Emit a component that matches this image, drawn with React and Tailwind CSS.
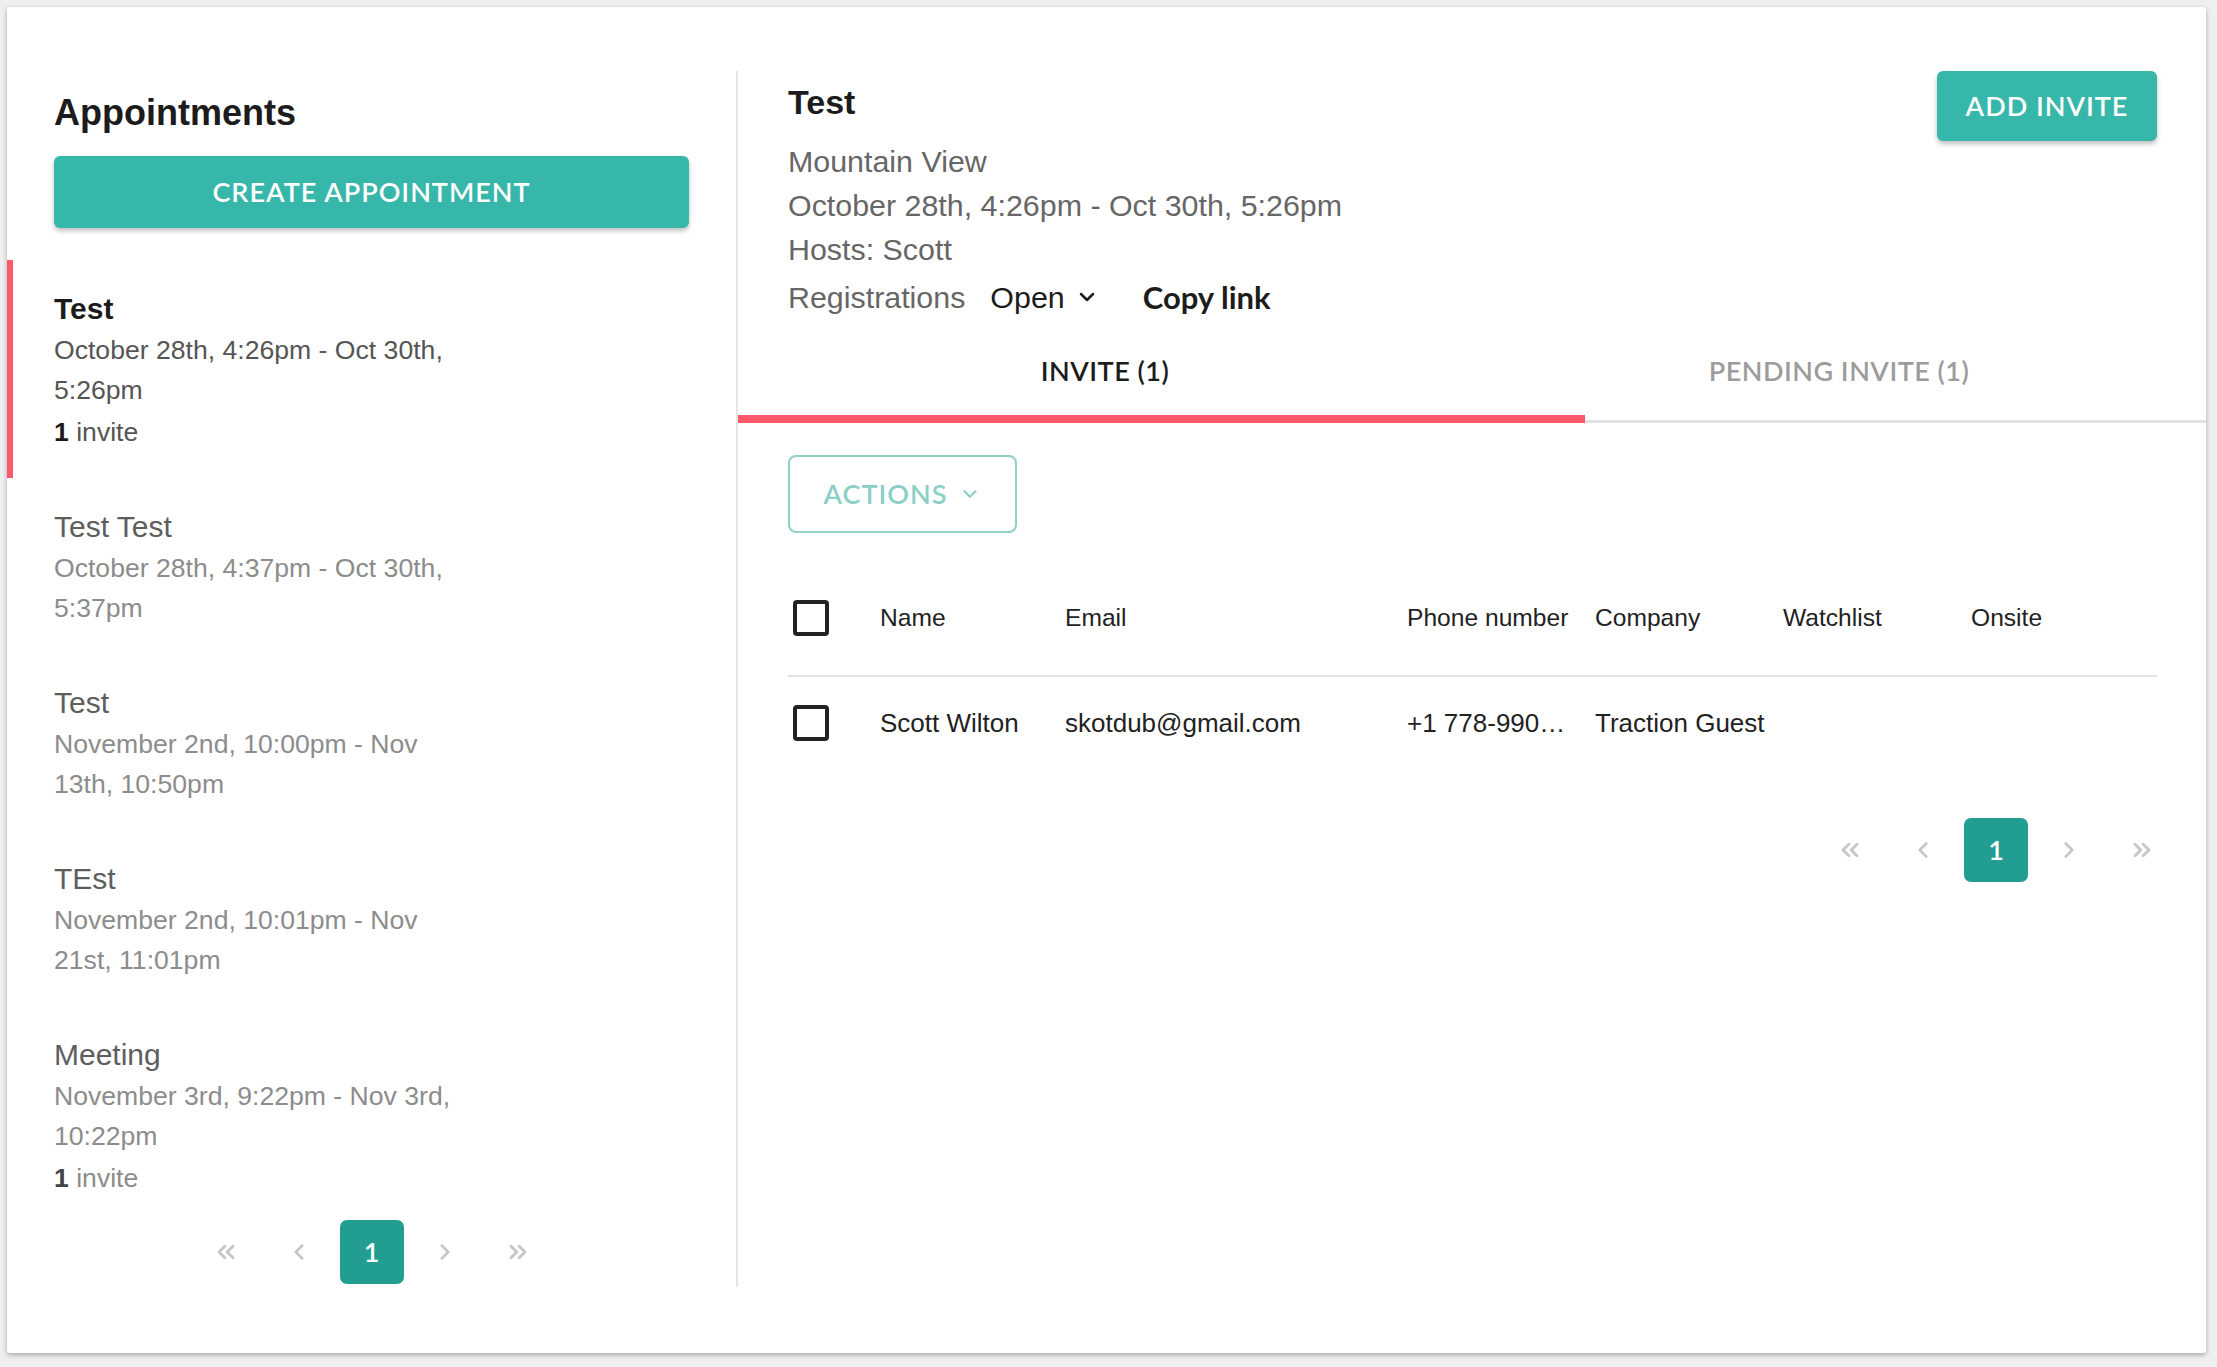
import { ChevronDown, ChevronLeft, ChevronRight, ChevronsLeft, ChevronsRight } from 'lucide-react';

const appointments = [
  { title: 'Test', lines: ['October 28th, 4:26pm - Oct 30th,', '5:26pm'], invites: 1, active: true },
  { title: 'Test Test', lines: ['October 28th, 4:37pm - Oct 30th,', '5:37pm'] },
  { title: 'Test', lines: ['November 2nd, 10:00pm - Nov', '13th, 10:50pm'] },
  { title: 'TEst', lines: ['November 2nd, 10:01pm - Nov', '21st, 11:01pm'] },
  { title: 'Meeting', lines: ['November 3rd, 9:22pm - Nov 3rd,', '10:22pm'], invites: 1 },
];

const cols = 'grid grid-cols-[92px_185px_342px_188px_188px_188px_186px] items-center';

function Checkbox() {
  return <div className="ml-[5px] w-[36px] h-[36px] rounded-[4px] border-[4px] border-[#222]" />;
}

function Pager() {
  return (
    <div className="flex items-center gap-[9px] text-[#c6c6c6]">
      <div className="w-[64px] h-[64px] flex items-center justify-center"><ChevronsLeft size={28} strokeWidth={2.4} /></div>
      <div className="w-[64px] h-[64px] flex items-center justify-center"><ChevronLeft size={26} strokeWidth={2.4} /></div>
      <div className="w-[64px] h-[64px] rounded-[7px] bg-[#219d92] text-white flex items-center justify-center font-['Lato',sans-serif] font-semibold text-[27px]">1</div>
      <div className="w-[64px] h-[64px] flex items-center justify-center"><ChevronRight size={26} strokeWidth={2.4} /></div>
      <div className="w-[64px] h-[64px] flex items-center justify-center"><ChevronsRight size={28} strokeWidth={2.4} /></div>
    </div>
  );
}

function AppointmentItem({ a }) {
  return (
    <div className={`pl-[41px] pt-[28px] pb-[26px] border-l-[6px] ${a.active ? 'border-[#fe5a6b]' : 'border-transparent'}`}>
      <div className={`text-[30px] leading-[42px] ${a.active ? 'font-bold text-[#1b1b1b]' : 'text-[#5e5e5e]'}`}>{a.title}</div>
      {a.lines.map((l, i) => (
        <div key={i} className={`text-[26.6px] leading-[40px] ${a.active ? 'text-[#555]' : 'text-[#8c8c8c]'}`}>{l}</div>
      ))}
      {a.invites && (
        <div className={`mt-[2px] text-[26.6px] leading-[40px] ${a.active ? 'text-[#555]' : 'text-[#8c8c8c]'}`}>
          <span className={`font-bold ${a.active ? 'text-[#1b1b1b]' : 'text-[#444]'}`}>{a.invites}</span> invite
        </div>
      )}
    </div>
  );
}

export default function App() {
  return (
    <div className="w-[2217px] h-[1367px] bg-[#efefef] pt-[7px] pl-[7px] font-['Liberation_Sans',Arial,sans-serif]">
      <div className="w-[2199px] h-[1346px] bg-white rounded-[3px] shadow-[0_2px_5px_rgba(0,0,0,0.3)] flex">
        <aside className="w-[731px] mt-[64px] h-[1216px] border-r-2 border-[#e6e6e6] flex flex-col">
          <div className="pl-[47px] pr-[47px]">
            <h1 className="mt-[22px] text-[36px] leading-[40px] font-bold text-[#1c1c1c]">Appointments</h1>
            <button className="mt-[23px] w-full h-[72px] rounded-[6px] bg-[#37b7aa] shadow-[0_3px_5px_rgba(0,0,0,0.25)] text-white text-[27px] tracking-[1px] font-['Lato',sans-serif] font-semibold">
              CREATE APPOINTMENT
            </button>
          </div>
          <div className="mt-[32px]">
            {appointments.map((a, i) => <AppointmentItem key={i} a={a} />)}
          </div>
          <div className="-mt-[4px] pl-[47px] pr-[47px] flex justify-center">
            <Pager />
          </div>
        </aside>

        <section className="flex-1 flex flex-col">
          <div className="pl-[50px] pr-[49px] pt-[64px] flex justify-between items-start">
            <div>
              <h2 className="mt-[11px] text-[34px] leading-[40px] font-bold text-[#1c1c1c]">Test</h2>
              <div className="mt-[17px] text-[30.4px] leading-[44px] text-[#666]">
                <div>Mountain View</div>
                <div>October 28th, 4:26pm - Oct 30th, 5:26pm</div>
                <div>Hosts: Scott</div>
                <div className="flex items-center leading-[52px]">
                  <span>Registrations</span>
                  <span className="ml-[25px] text-[#1c1c1c]">Open</span>
                  <ChevronDown size={24} strokeWidth={2.5} className="ml-[10px] text-[#1c1c1c]" />
                  <span className="ml-[44px] font-['Lato',sans-serif] font-bold text-[31px] text-[#1c1c1c]">Copy link</span>
                </div>
              </div>
            </div>
            <button className="w-[220px] h-[70px] rounded-[6px] bg-[#37b7aa] shadow-[0_3px_5px_rgba(0,0,0,0.25)] text-white text-[27px] tracking-[1px] font-['Lato',sans-serif] font-semibold">
              ADD INVITE
            </button>
          </div>

          <div className="relative h-[100px] border-b-[3px] border-[#e2e2e2] flex font-['Lato',sans-serif] font-semibold text-[27px] tracking-[0.5px]">
            <div className="flex-1 flex items-center justify-center text-[#1c1c1c]">INVITE (1)</div>
            <div className="flex-1 flex items-center justify-center text-[#9c9c9c]">PENDING INVITE (1)</div>
            <div className="absolute left-0 bottom-[-3px] w-[847px] h-[8px] bg-[#fe5a6b]" />
          </div>

          <div className="pl-[50px] pr-[49px]">
            <button className="mt-[32px] w-[229px] h-[78px] rounded-[8px] border-2 border-[#8fd0c9] flex items-center justify-center gap-[12px] text-[#8ccfc7] text-[27px] tracking-[1px] font-['Lato',sans-serif] font-semibold">
              ACTIONS
              <ChevronDown size={22} strokeWidth={2.5} />
            </button>

            <div className="mt-[43px] pb-[15px] border-b-2 border-[#e2e2e2]">
              <div className={`${cols} h-[84px] text-[24.6px] text-[#222]`}>
                <Checkbox />
                <div>Name</div>
                <div>Email</div>
                <div>Phone number</div>
                <div>Company</div>
                <div>Watchlist</div>
                <div>Onsite</div>
              </div>
            </div>
            <div className={`${cols} h-[92px] text-[26px] text-[#222]`}>
              <Checkbox />
              <div>Scott Wilton</div>
              <div>skotdub@gmail.com</div>
              <div className="truncate pr-[20px]">+1 778-990…</div>
              <div>Traction Guest</div>
              <div />
              <div />
            </div>

            <div className="mt-[49px] -mr-[17px] flex justify-end">
              <Pager />
            </div>
          </div>
        </section>
      </div>
    </div>
  );
}
